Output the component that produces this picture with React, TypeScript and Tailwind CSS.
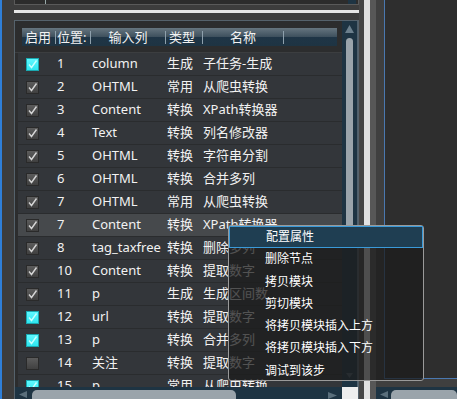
import React from 'react';

interface Row
{
  on: 'cyan' | 'gray' | 'off';
  pos: string;
  col: string;
  type: string;
  name: string;
  hl?: boolean;
}

const rows: Row[] = [
  { on: 'cyan', pos: '1', col: 'column', type: '生成', name: '子任务-生成' },
  { on: 'gray', pos: '2', col: 'OHTML', type: '常用', name: '从爬虫转换' },
  { on: 'gray', pos: '3', col: 'Content', type: '转换', name: 'XPath转换器' },
  { on: 'gray', pos: '4', col: 'Text', type: '转换', name: '列名修改器' },
  { on: 'gray', pos: '5', col: 'OHTML', type: '转换', name: '字符串分割' },
  { on: 'gray', pos: '6', col: 'OHTML', type: '转换', name: '合并多列' },
  { on: 'gray', pos: '7', col: 'OHTML', type: '常用', name: '从爬虫转换' },
  { on: 'gray', pos: '7', col: 'Content', type: '转换', name: 'XPath转换器', hl: true },
  { on: 'gray', pos: '8', col: 'tag_taxfree', type: '转换', name: '删除多列' },
  { on: 'gray', pos: '10', col: 'Content', type: '转换', name: '提取数字' },
  { on: 'gray', pos: '11', col: 'p', type: '生成', name: '生成区间数' },
  { on: 'cyan', pos: '12', col: 'url', type: '转换', name: '提取数字' },
  { on: 'cyan', pos: '13', col: 'p', type: '转换', name: '合并多列' },
  { on: 'off', pos: '14', col: '关注', type: '转换', name: '提取数字' },
  { on: 'cyan', pos: '15', col: 'p', type: '常用', name: '从爬虫转换' },
];

const menuItems = ['配置属性', '删除节点', '拷贝模块', '剪切模块', '将拷贝模块插入上方', '将拷贝模块插入下方', '调试到该步'];

const Check: React.FC<{ on: Row['on'] }> = ({ on }) =>
{
  const box =
    on === 'cyan'
      ? 'bg-[linear-gradient(to_bottom,#5ff8ff,#2ee6f0)] border-[#1aa8b0]'
      : 'bg-[linear-gradient(to_bottom,#5c5c5c,#404040)] border-[#2a2a2a]';
  return (
    <div className={`w-[13px] h-[13px] border ${box} flex items-center justify-center`}>
      {on !== 'off' && (
        <svg width="11" height="11" viewBox="0 0 11 11">
          <path
            d="M2 5.5 L4.5 8.5 L9.5 1.5"
            fill="none"
            stroke={on === 'cyan' ? '#c8ffff' : '#d6d6d6'}
            strokeWidth="1.4"
          />
        </svg>
      )}
    </div>
  );
};

const App: React.FC = () =>
{
  return (
    <div
      className="relative flex w-[457px] h-[399px] overflow-hidden bg-[#3d3d3d] text-[#f2f2f2]"
      style={{ fontFamily: '"Noto Sans", "Noto Sans CJK SC", sans-serif' }}
    >
      <div className="w-[2px] bg-[#2f7fd8]" />
      <div className="w-[12px]" />

      {/* left column */}
      <div className="w-[345px] flex flex-col">
        <div className="h-[5px] flex border-x border-b border-[#5a5a5a] bg-[#2c2c2c]">
          <div className="w-[30px]" />
          <div className="w-[1px] bg-[#9aa]" />
          <div className="flex-1" />
          <div className="w-[8px] bg-[#1e3443]" />
          <div className="w-[2px]" />
        </div>
        <div className="h-[5px]" />
        <div className="h-[3px] bg-[#e6e6e6]" />
        <div className="h-[7px]" />

        {/* table panel */}
        <div className="flex-1 border-t border-l border-r border-[#55626c] grid grid-cols-[327px_16px] grid-rows-[366px_12px]">
          <div className="bg-[#2c2d2e] overflow-hidden flex flex-col">
            <div className="h-[32px] shrink-0 pt-[7px] pl-[7px] pr-[5px] border-b border-[#3c3e40]">
              <div className="h-[18px] flex items-center text-[13px] leading-none bg-[linear-gradient(to_bottom,#66757f_0%,#3f515e_48%,#1f3546_52%,#1e3443_100%)]">
                <div className="w-[34px] pl-[3px] border-r border-[#8ea0ac]">启用</div>
                <div className="w-[35px] pl-[1px] border-r border-[#8ea0ac]">位置:</div>
                <div className="w-[75px] text-center border-r border-[#8ea0ac]">输入列</div>
                <div className="w-[37px] pl-[3px] border-r border-[#8ea0ac]">类型</div>
                <div className="w-[81px] text-center border-r border-[#8ea0ac]">名称</div>
                <div className="flex-1" />
              </div>
            </div>
            <div className="ml-[3px] flex flex-col">
              {rows.map((r, i) => (
                <div
                  key={i}
                  className={`h-[23px] shrink-0 flex items-center text-[13px] border-b border-[#2a2c2e] ${r.hl ? 'bg-[#46494c]' : 'bg-[#33363a]'}`}
                >
                  <div className="w-[39px] pl-[8px]">
                    <Check on={r.on} />
                  </div>
                  <div className="w-[35px]">{r.pos}</div>
                  <div className="w-[75px] whitespace-nowrap">{r.col}</div>
                  <div className="w-[36px]">{r.type}</div>
                  <div className="flex-1 whitespace-nowrap">{r.name}</div>
                </div>
              ))}
            </div>
          </div>

          {/* vertical scrollbar */}
          <div className="bg-[#1e3443] border-r border-[#50606c] flex flex-col items-center pt-[4px]">
            <svg width="9" height="8" viewBox="0 0 9 8">
              <path d="M4.5 0 L9 8 L0 8 Z" fill="#6b7f8c" />
            </svg>
            <div className="mt-[5px] w-[7px] h-[205px] rounded-full bg-[#9aa4ab]" />
            <div className="flex-1" />
            <svg width="7" height="5" viewBox="0 0 7 5" className="mb-[9px]">
              <path d="M0 0 L7 0 L3.5 5 Z" fill="#4a5e6b" />
            </svg>
          </div>

          {/* horizontal scrollbar */}
          <div className="bg-[#1e3443] flex items-start pt-[3px] pl-[4px] overflow-hidden">
            <svg width="8" height="7" viewBox="0 0 8 7" className="mt-[1px]">
              <path d="M0 3.5 L8 0 L8 7 Z" fill="#5a6f7c" />
            </svg>
            <div className="ml-[5px] w-[204px] h-[14px] rounded-[5px] bg-[#9aa4ab]" />
            <div className="flex-1" />
            <svg width="9" height="7" viewBox="0 0 9 7" className="mt-[2px] mr-[5px]">
              <path d="M9 3.5 L0 0 L0 7 Z" fill="#5a6f7c" />
            </svg>
          </div>
          <div className="bg-[#eeeeee]" />
        </div>
      </div>

      {/* splitter */}
      <div className="w-[5px] bg-[#464646]" />
      <div className="w-[6px] bg-[#e2e2e2]" />
      <div className="w-[6px] bg-[#575757]" />

      {/* right area */}
      <div className="flex-1 flex flex-col">
        <div className="flex-1 flex flex-col">
          <div className="h-[379px] flex">
            <div className="w-[8px] bg-[#3f3f3f]" />
            <div className="flex-1 bg-[#2e2e2e] border-l border-b border-[#4a78b0]" />
          </div>
          <div className="flex-1 bg-[#3f3f3f]" />
        </div>
        <div className="h-[12px] bg-[#1e3443] flex items-start pt-[3px] pl-[4px]">
          <svg width="8" height="7" viewBox="0 0 8 7" className="mt-[1px]">
            <path d="M0 3.5 L8 0 L8 7 Z" fill="#5a6f7c" />
          </svg>
          <div className="ml-[3px] flex-1 h-[14px] rounded-[5px] bg-[#9aa4ab]" />
        </div>
      </div>

      {/* context menu */}
      <div className="absolute left-[228px] top-[225px] w-[196px] h-[156px] rounded-[3px] border border-[#9a9a9a] bg-[#1c1c1c]/75 flex flex-col text-[12px] text-white">
        {menuItems.map((m, i) => (
          <div
            key={i}
            className={`h-[22px] shrink-0 flex items-center pl-[36px] ${i === 0 ? 'bg-[#1f3e52] border border-[#3a9ad9]' : 'mt-[0.3px]'}`}
          >
            {m}
          </div>
        ))}
      </div>
    </div>
  );
};

export default App;
